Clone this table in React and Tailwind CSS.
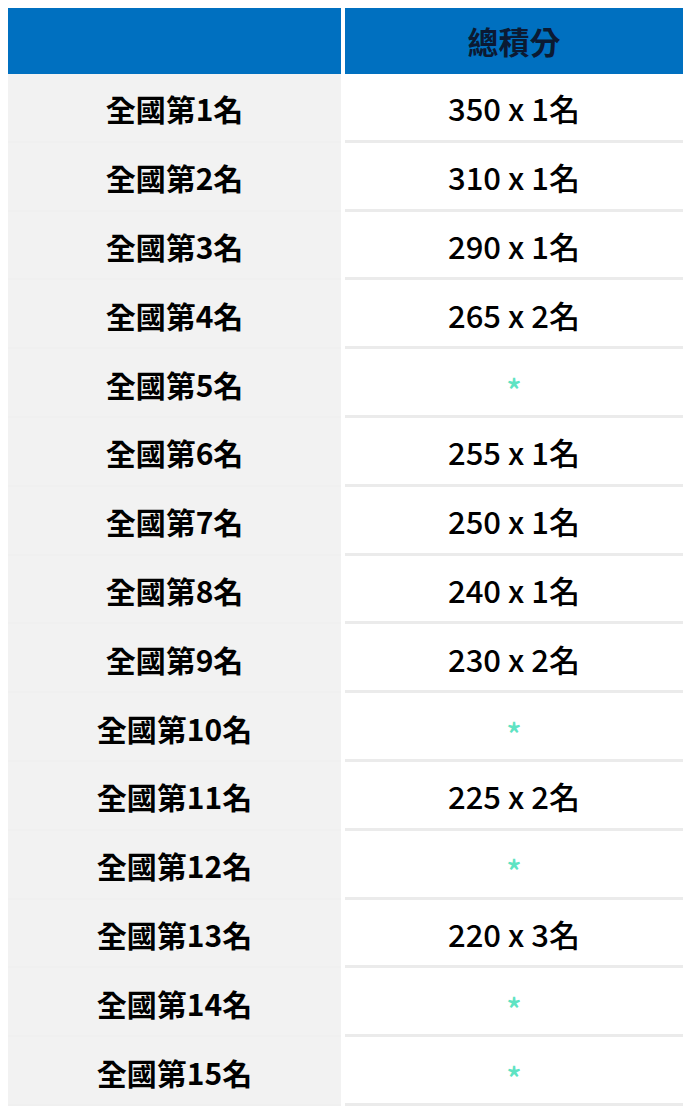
const rows = [
  ["全國第1名", "350 x 1名"],
  ["全國第2名", "310 x 1名"],
  ["全國第3名", "290 x 1名"],
  ["全國第4名", "265 x 2名"],
  ["全國第5名", null],
  ["全國第6名", "255 x 1名"],
  ["全國第7名", "250 x 1名"],
  ["全國第8名", "240 x 1名"],
  ["全國第9名", "230 x 2名"],
  ["全國第10名", null],
  ["全國第11名", "225 x 2名"],
  ["全國第12名", null],
  ["全國第13名", "220 x 3名"],
  ["全國第14名", null],
  ["全國第15名", null],
];

export default function App() {
  return (
    <div
      className="w-[687px] h-[1116px] bg-white pl-[8px] pt-[8px]"
      style={{ fontFamily: '"Noto Sans CJK TC", "Noto Sans", sans-serif' }}
    >
      <div className="grid w-[675px] grid-cols-[333px_338px] gap-x-[4px]">
        <div className="h-[66px] bg-[#0070c0]" />
        <div className="flex h-[66px] items-center justify-center bg-[#0070c0] text-[31px] font-bold text-[#0b1a33]">
          總積分
        </div>
        {rows.map(([rank, score]) => (
          <Row key={rank} rank={rank} score={score} />
        ))}
      </div>
    </div>
  );
}

function Row({ rank, score }) {
  return (
    <>
      <div className="flex h-[68.8px] items-center justify-center border-b-[2px] border-[#f0f0f0] bg-[#f2f2f2] pt-[3px] text-[30px] font-bold text-black">
        {rank}
      </div>
      <div className="flex h-[68.8px] items-center justify-center border-b-[3px] border-[#ebebeb] bg-white pt-[3px] text-[31px] font-medium text-black">
        {score ?? <span className="mt-[10px] text-[32px] leading-none text-[#5fe3c3]">*</span>}
      </div>
    </>
  );
}
